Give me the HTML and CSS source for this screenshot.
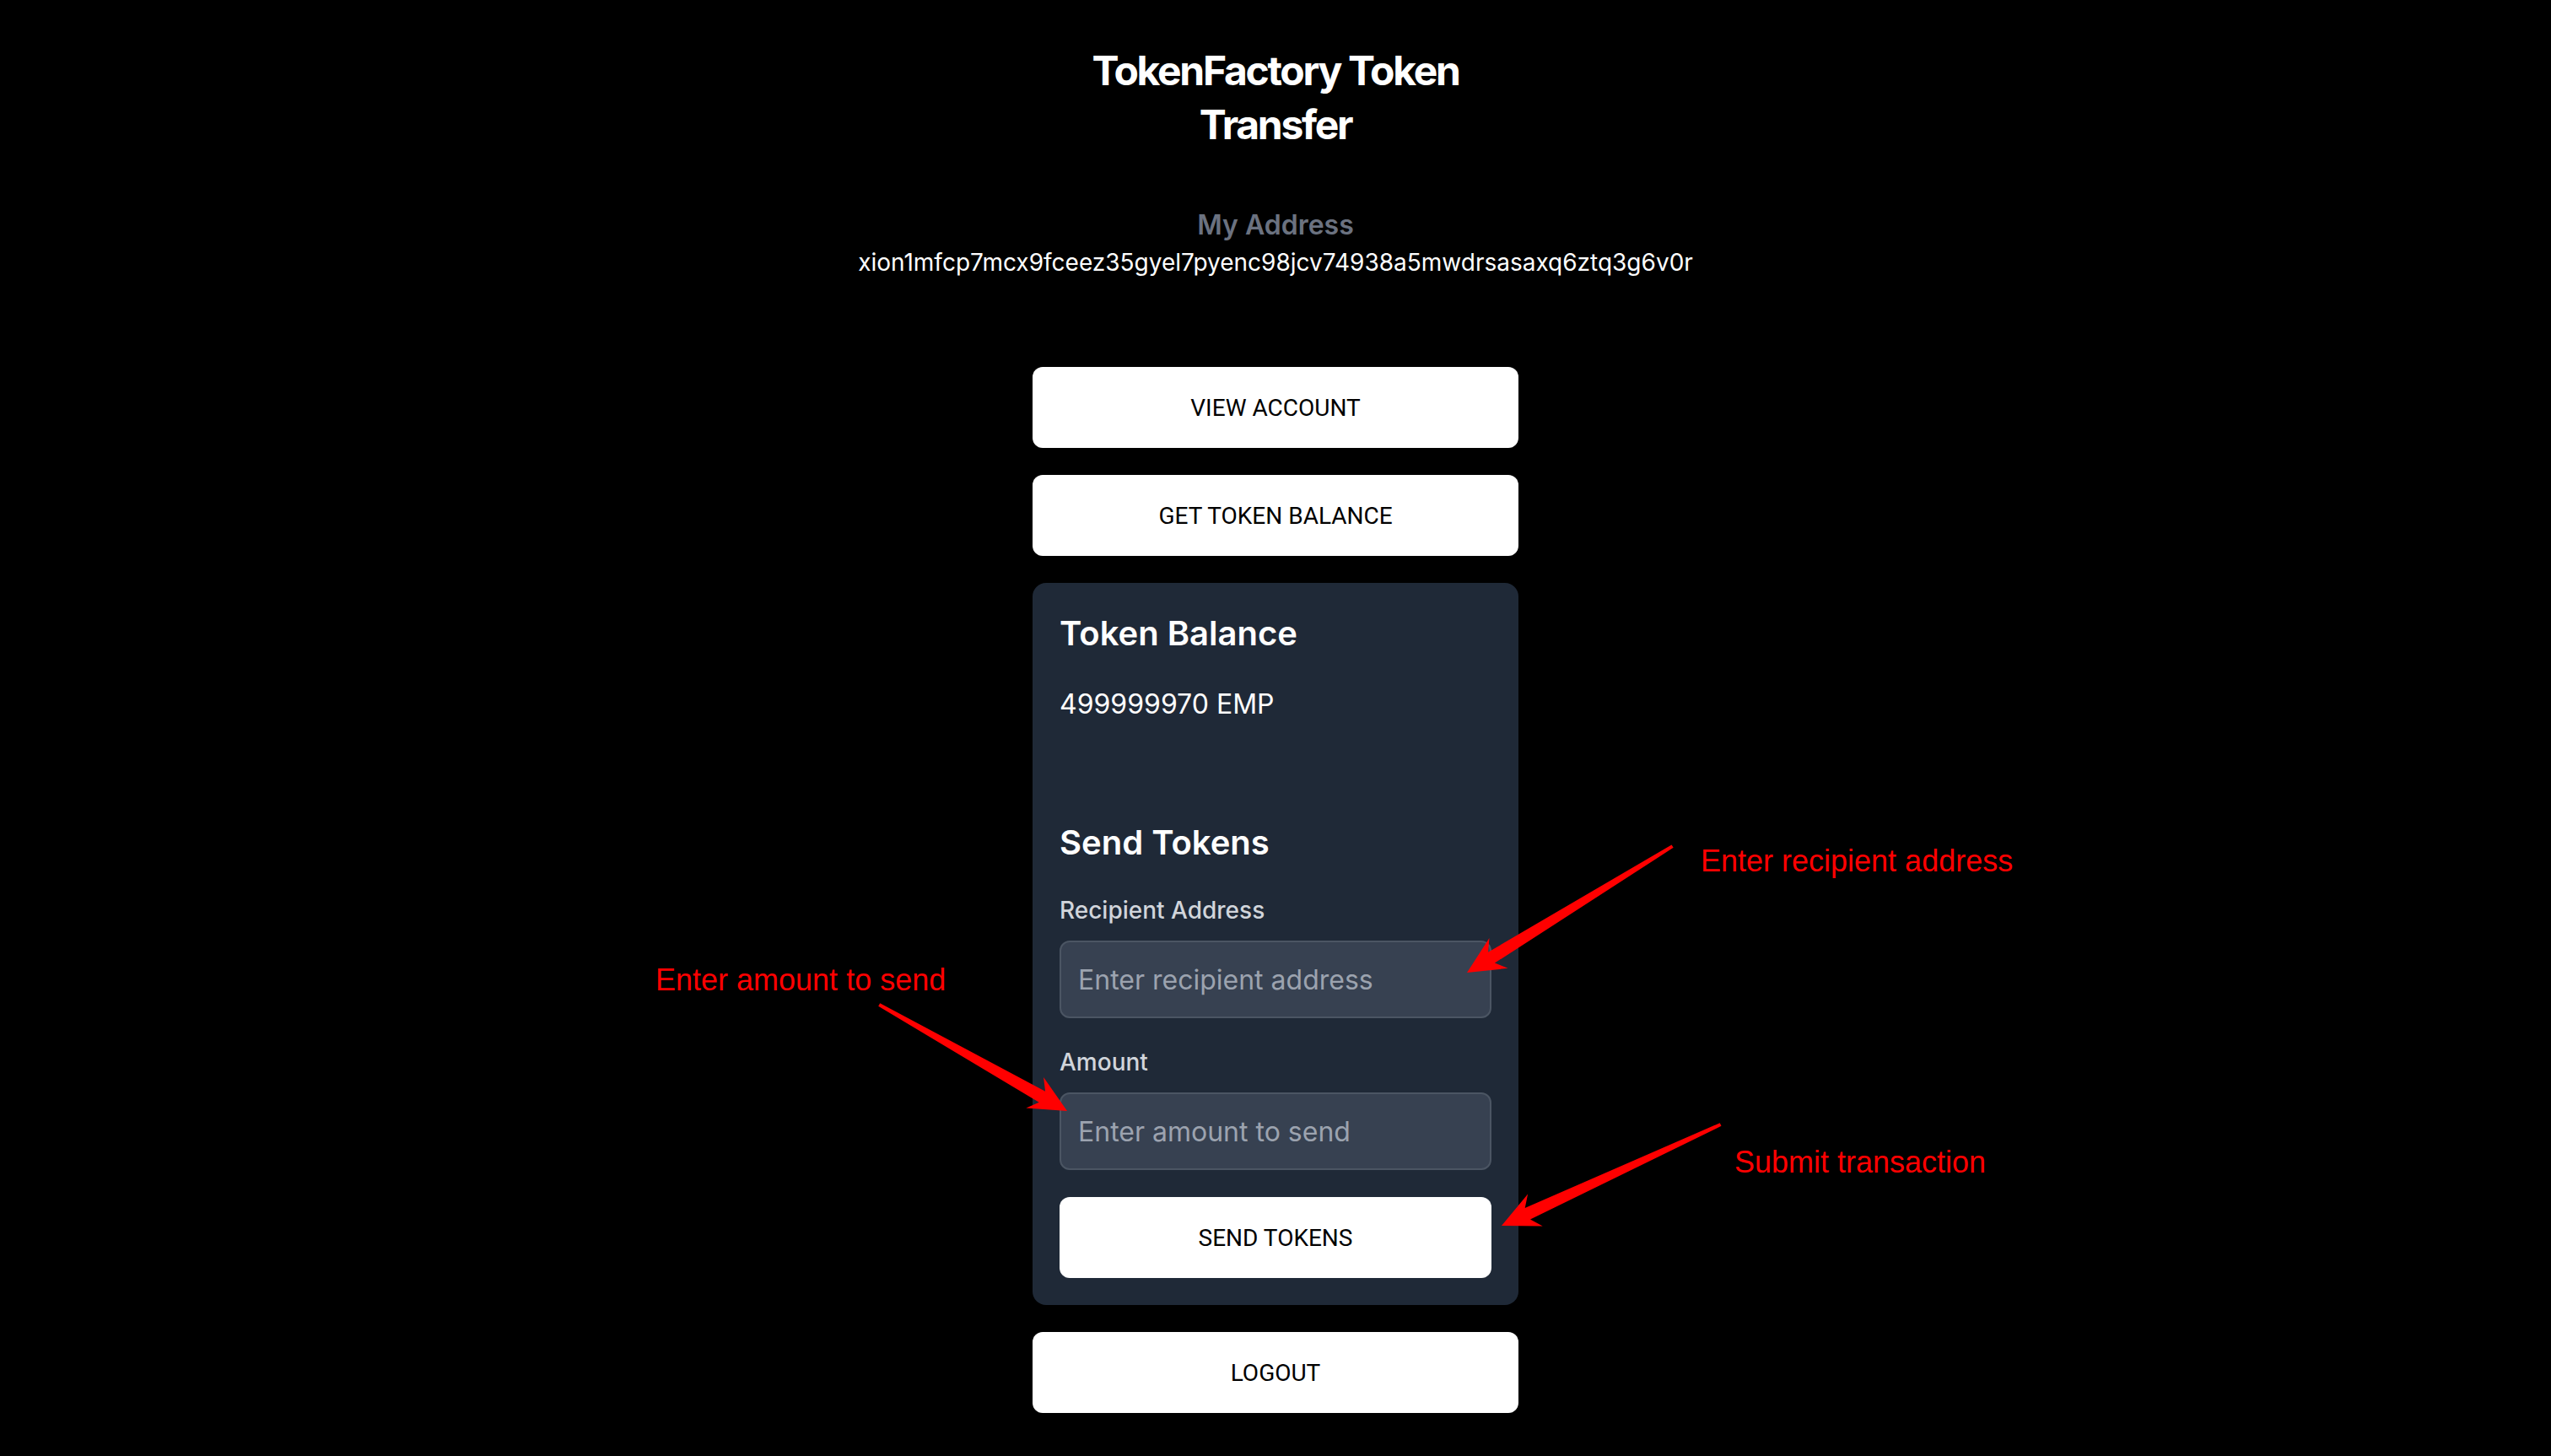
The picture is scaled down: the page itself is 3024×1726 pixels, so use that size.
FILE: index.html
```html
<!DOCTYPE html>
<html lang="en">
<head>
<meta charset="utf-8">
<title>TokenFactory Token Transfer</title>
<link rel="stylesheet" href="styles.css">
</head>
<body>
<main class="page">
  <header class="header">
    <h1 class="title">TokenFactory Token Transfer</h1>
    <p class="address-label">My Address</p>
    <p class="address">xion1mfcp7mcx9fceez35gyel7pyenc98jcv74938a5mwdrsasaxq6ztq3g6v0r</p>
  </header>
  <section class="actions">
    <button class="btn">VIEW ACCOUNT</button>
    <button class="btn">GET TOKEN BALANCE</button>
    <div class="card">
      <h2 class="card-title">Token Balance</h2>
      <p class="balance">499999970 EMP</p>
      <div class="send">
        <h2 class="card-title">Send Tokens</h2>
        <div class="field">
          <label class="field-label" for="recipient">Recipient Address</label>
          <input class="field-input" id="recipient" type="text" placeholder="Enter recipient address">
        </div>
        <div class="field">
          <label class="field-label" for="amount">Amount</label>
          <input class="field-input" id="amount" type="text" placeholder="Enter amount to send">
        </div>
        <button class="btn btn-send">SEND TOKENS</button>
      </div>
    </div>
    <button class="btn">LOGOUT</button>
  </section>
</main>
<div class="annotations">
  <svg class="arrows" width="3024" height="1726" viewBox="0 0 3024 1726">
    <polygon points="0,0 -44,-21 -34,-7.5 -286,-2 -286,2 -34,7.5 -44,21" transform="translate(1739 1153) rotate(148.4)"/>
    <polygon points="0,0 -44,-21 -34,-7.5 -256,-2 -256,2 -34,7.5 -44,21" transform="translate(1265 1317) rotate(29.5)"/>
    <polygon points="0,0 -44,-21 -34,-7.5 -286,-2 -286,2 -34,7.5 -44,21" transform="translate(1780 1453) rotate(155.2)"/>
  </svg>
  <span class="note note-recipient">Enter recipient address</span>
  <span class="note note-amount">Enter amount to send</span>
  <span class="note note-submit">Submit transaction</span>
</div>
</body>
</html>
```

FILE: styles.css
```css
html, body {
  margin: 0;
  padding: 0;
  background: #000;
}

body {
  position: relative;
  height: 1726px;
  overflow: hidden;
  font-family: Inter, "Noto Sans", sans-serif;
  color: #fff;
}

.page {
  width: 576px;
  margin: 0 auto;
  padding-top: 52px;
  display: flex;
  flex-direction: column;
  align-items: center;
}

.header {
  display: flex;
  flex-direction: column;
  align-items: center;
  text-align: center;
  margin-bottom: 104px;
}

.title {
  max-width: 576px;
  margin: 0 0 63px;
  font-size: 48px;
  line-height: 64px;
  font-weight: 700;
  letter-spacing: -2.3px;
}

.address-label {
  margin: 0;
  font-size: 32px;
  line-height: 48px;
  font-weight: 600;
  color: #6b7280;
}

.address {
  margin: 0;
  font-size: 28px;
  line-height: 40px;
  white-space: nowrap;
}

.actions {
  width: 576px;
  display: flex;
  flex-direction: column;
  gap: 32px;
}

.btn {
  display: block;
  width: 100%;
  height: 96px;
  padding: 0;
  background: #fff;
  color: #000;
  border: none;
  border-radius: 12px;
  font-family: Roboto, "Liberation Sans", sans-serif;
  font-size: 28px;
  font-weight: 400;
}

.card {
  background: #1f2937;
  border-radius: 16px;
  padding: 32px;
}

.card-title {
  margin: 0;
  font-size: 40px;
  line-height: 56px;
  font-weight: 600;
}

.balance {
  margin: 32px 0 0;
  font-size: 32px;
  line-height: 48px;
}

.send {
  margin-top: 112px;
}

.field {
  margin-top: 32px;
}

.field-label {
  display: block;
  margin-bottom: 16px;
  font-size: 28px;
  line-height: 40px;
  font-weight: 500;
  color: #d1d5db;
}

.field-input {
  box-sizing: border-box;
  display: block;
  width: 100%;
  height: 92px;
  padding: 0 20px;
  background: #374151;
  border: 2px solid #4b5563;
  border-radius: 12px;
  font-family: Inter, "Noto Sans", sans-serif;
  font-size: 32px;
  color: #fff;
  outline: none;
}

.field-input::placeholder {
  color: #9ca3af;
}

.btn-send {
  margin-top: 32px;
}

.annotations {
  position: absolute;
  left: 0;
  top: 0;
  width: 3024px;
  height: 1726px;
  pointer-events: none;
}

.arrows {
  position: absolute;
  left: 0;
  top: 0;
  fill: #ff0000;
}

.note {
  position: absolute;
  font-family: "Liberation Sans", Arial, sans-serif;
  font-size: 36px;
  line-height: 36px;
  color: #ff0000;
  white-space: nowrap;
}

.note-recipient {
  left: 2016px;
  top: 1003px;
}

.note-amount {
  left: 777px;
  top: 1144px;
}

.note-submit {
  left: 2056px;
  top: 1360px;
}
```
